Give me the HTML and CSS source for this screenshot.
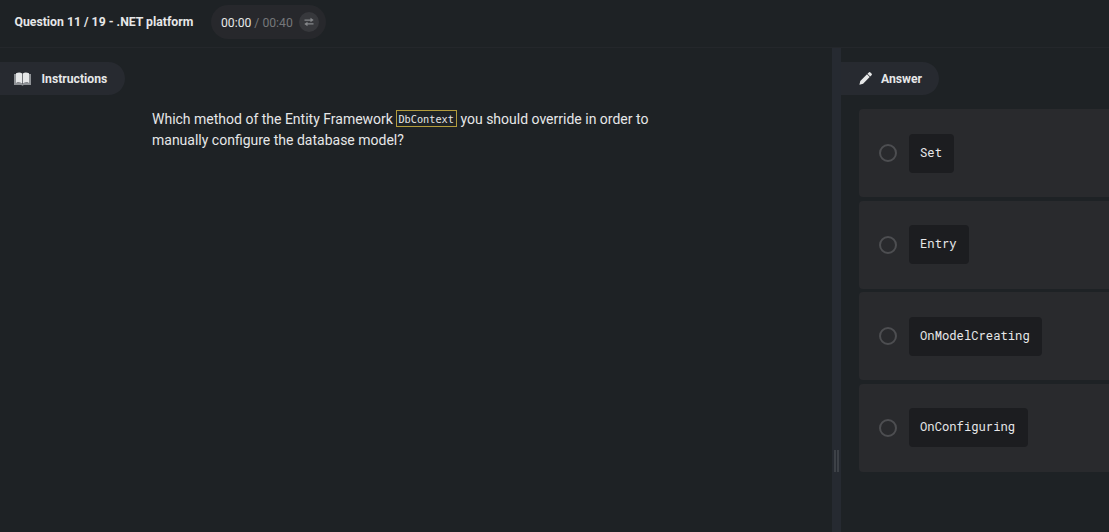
FILE: index.html
```html
<!DOCTYPE html>
<html lang="en">
<head>
<meta charset="utf-8">
<title>Question 11 / 19 - .NET platform</title>
<link rel="stylesheet" href="styles.css">
</head>
<body>
<header class="topbar">
  <h1 class="title">Question 11 / 19 - .NET platform</h1>
  <div class="timer">
    <span class="elapsed">00:00</span><span class="total">/ 00:40</span>
    <span class="swap"><svg width="10" height="10" viewBox="0 0 10 10"><path d="M.5 2.5h6V.8L9.7 3.1 6.5 5.3V3.7h-6zM9.5 6.3h-6V4.8L.3 7.1l3.2 2.2V7.5h6z"/></svg></span>
  </div>
</header>
<main class="panes">
  <section class="instructions">
    <div class="tab tab-instructions">
      <svg class="book" width="17" height="14" viewBox="0 0 17 14"><path class="cover" d="M0 2h2v9h5.500l1 1 1-1H15V2h2v11H9.800l-1.300.8-1.300-.8H0z"/><path d="M2 1.200C4.500 0 6.700.2 8.200 1.500v10C6.700 10.500 4.500 10.200 2 11zM15 1.200C12.500 0 10.300.2 8.800 1.500v10c1.500-1 3.700-1.300 6.200-.5z"/></svg>
      <span>Instructions</span>
    </div>
    <p class="question">Which method of the Entity Framework <code>DbContext</code> you should override in order to<br>manually configure the database model?</p>
  </section>
  <div class="divider"><span class="grip"></span></div>
  <section class="answer">
    <div class="tab tab-answer">
      <svg class="pencil" width="13" height="13" viewBox="0 0 13 13"><path d="M8.500 1.800 9.800.5q.8-.8 1.600 0l1.100 1.100q.8.800 0 1.600l-1.300 1.300zM8 2.300l2.700 2.700-6.600 6.800L.4 12.800l.9-3.900z"/></svg>
      <span>Answer</span>
    </div>
    <div class="options">
      <label class="option"><span class="radio"></span><code>Set</code></label>
      <label class="option"><span class="radio"></span><code>Entry</code></label>
      <label class="option"><span class="radio"></span><code>OnModelCreating</code></label>
      <label class="option"><span class="radio"></span><code>OnConfiguring</code></label>
    </div>
  </section>
</main>
</body>
</html>
```
FILE: styles.css
```css
* { box-sizing: border-box; }
body {
  margin: 0;
  height: 532px;
  overflow: hidden;
  display: flex;
  flex-direction: column;
  background: #1e2225;
  color: #e6e7e8;
  font-family: Roboto, sans-serif;
}
svg { display: block; fill: currentColor; flex: none; }
.topbar {
  height: 48px;
  flex: none;
  display: flex;
  align-items: flex-start;
  padding: 5px 0 0 14.500px;
  border-bottom: 1px solid #24272b;
}
.title {
  margin: 0;
  width: 196px;
  font-size: 12.250px;
  line-height: 34px;
  font-weight: 700;
  white-space: nowrap;
}
.timer {
  width: 115.500px;
  height: 34px;
  display: flex;
  align-items: center;
  padding-left: 10.500px;
  border-radius: 17px;
  background: #27282c;
  font-size: 12.200px;
  white-space: nowrap;
}
.elapsed, .total { position: relative; top: .5px; }
.total { margin-left: 3px; color: #75777a; }
.swap {
  width: 20px;
  height: 20px;
  margin-left: 6px;
  display: grid;
  place-items: center;
  border-radius: 50%;
  background: #37383c;
  color: #85878a;
}
.panes { flex: 1; display: flex; min-height: 0; }
.instructions { width: 831.500px; padding-top: 14px; }
.tab {
  height: 33px;
  display: flex;
  align-items: center;
  border-radius: 0 17px 17px 0;
  background: #272a30;
  font-size: 12.200px;
  font-weight: 700;
}
.tab-instructions { width: 124.500px; padding-left: 14px; gap: 10.500px; }
.cover { fill: #8f9296; }
.question {
  margin: 14px 0 0 152px;
  font-size: 14px;
  line-height: 21px;
  white-space: nowrap;
}
.question code {
  display: inline-block;
  height: 17px;
  margin-left: -.5px;
  padding: 0 2px 0 1.500px;
  border: 1px solid #b39c3c;
  font: 10.250px/16px "DejaVu Sans Mono", monospace;
  vertical-align: 1px;
}
.divider {
  width: 9px;
  display: flex;
  justify-content: center;
  padding-top: 402px;
  background: #262a31;
}
.grip {
  width: 5px;
  height: 22px;
  border: solid #3d4147;
  border-width: 0 2px;
}
.answer { flex: 1; padding-top: 14px; }
.tab-answer { width: 98px; padding-left: 18px; gap: 9.500px; }
.options {
  display: grid;
  gap: 3.500px;
  margin: 14px 0 0 18px;
}
.option {
  height: 88px;
  display: flex;
  align-items: center;
  gap: 12px;
  padding-left: 20px;
  border-radius: 4px 0 0 4px;
  background: #292a2d;
}
.radio {
  width: 18px;
  height: 18px;
  border: 2px solid #4d4e51;
  border-radius: 50%;
}
.option code {
  height: 39px;
  padding: 0 12.500px 0 11.500px;
  border-radius: 4px;
  background: #1c1d20;
  font: 12.200px/37px "Roboto Mono", "DejaVu Sans Mono", monospace;
}
```
